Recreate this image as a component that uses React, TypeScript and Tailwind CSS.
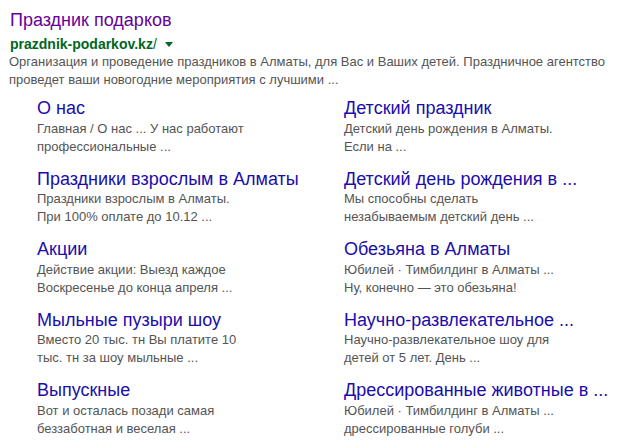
const sitelinks = [
  {
    title: "О нас",
    lines: ["Главная / О нас ... У нас работают", "профессиональные ..."],
  },
  {
    title: "Детский праздник",
    lines: ["Детский день рождения в Алматы.", "Если на ..."],
  },
  {
    title: "Праздники взрослым в Алматы",
    lines: ["Праздники взрослым в Алматы.", "При 100% оплате до 10.12 ..."],
  },
  {
    title: "Детский день рождения в ...",
    lines: ["Мы способны сделать", "незабываемым детский день ..."],
  },
  {
    title: "Акции",
    lines: ["Действие акции: Выезд каждое", "Воскресенье до конца апреля ..."],
  },
  {
    title: "Обезьяна в Алматы",
    lines: ["Юбилей · Тимбилдинг в Алматы ...", "Ну, конечно — это обезьяна!"],
  },
  {
    title: "Мыльные пузыри шоу",
    lines: ["Вместо 20 тыс. тн Вы платите 10", "тыс. тн за шоу мыльные ..."],
  },
  {
    title: "Научно-развлекательное ...",
    lines: ["Научно-развлекательное шоу для", "детей от 5 лет. День ..."],
  },
  {
    title: "Выпускные",
    lines: ["Вот и осталась позади самая", "беззаботная и веселая ..."],
  },
  {
    title: "Дрессированные животные в ...",
    lines: ["Юбилей · Тимбилдинг в Алматы ...", "дрессированные голуби ..."],
  },
];

export default function App() {
  return (
    <div className="w-[625px] h-[446px] overflow-hidden bg-white pt-[10px] pl-[9px] font-['Liberation_Sans',Arial,sans-serif]">
      {/* Result header */}
      <a className="block text-[18px] leading-[21.6px] text-[#660099] pl-px">
        Праздник подарков
      </a>
      <div className="flex items-center mt-[4px] pl-px text-[14px] leading-[16px] text-[#006621]">
        <span className="font-bold">prazdnik-podarkov.kz</span>
        <span>/</span>
        <span className="ml-[8px] mt-px w-0 h-0 border-t-[5px] border-t-[#006621] border-x-[4px] border-x-transparent" />
      </div>
      <p className="mt-px text-[13px] leading-[18.2px] text-[#545454]">
        Организация и проведение праздников в Алматы, для Вас и Ваших детей. Праздничное агентство
        <br />
        проведет ваши новогодние мероприятия с лучшими ...
      </p>

      {/* Sitelinks */}
      <div className="grid grid-cols-[307px_1fr] gap-y-[12.5px] pl-[28px] mt-[9px]">
        {sitelinks.map((s) => (
          <div key={s.title}>
            <a className="block text-[18px] leading-[21.6px] text-[#1a0dab] whitespace-nowrap">
              {s.title}
            </a>
            <p className="text-[13px] leading-[18.2px] text-[#545454] whitespace-nowrap">
              {s.lines[0]}
              <br />
              {s.lines[1]}
            </p>
          </div>
        ))}
      </div>
    </div>
  );
}
